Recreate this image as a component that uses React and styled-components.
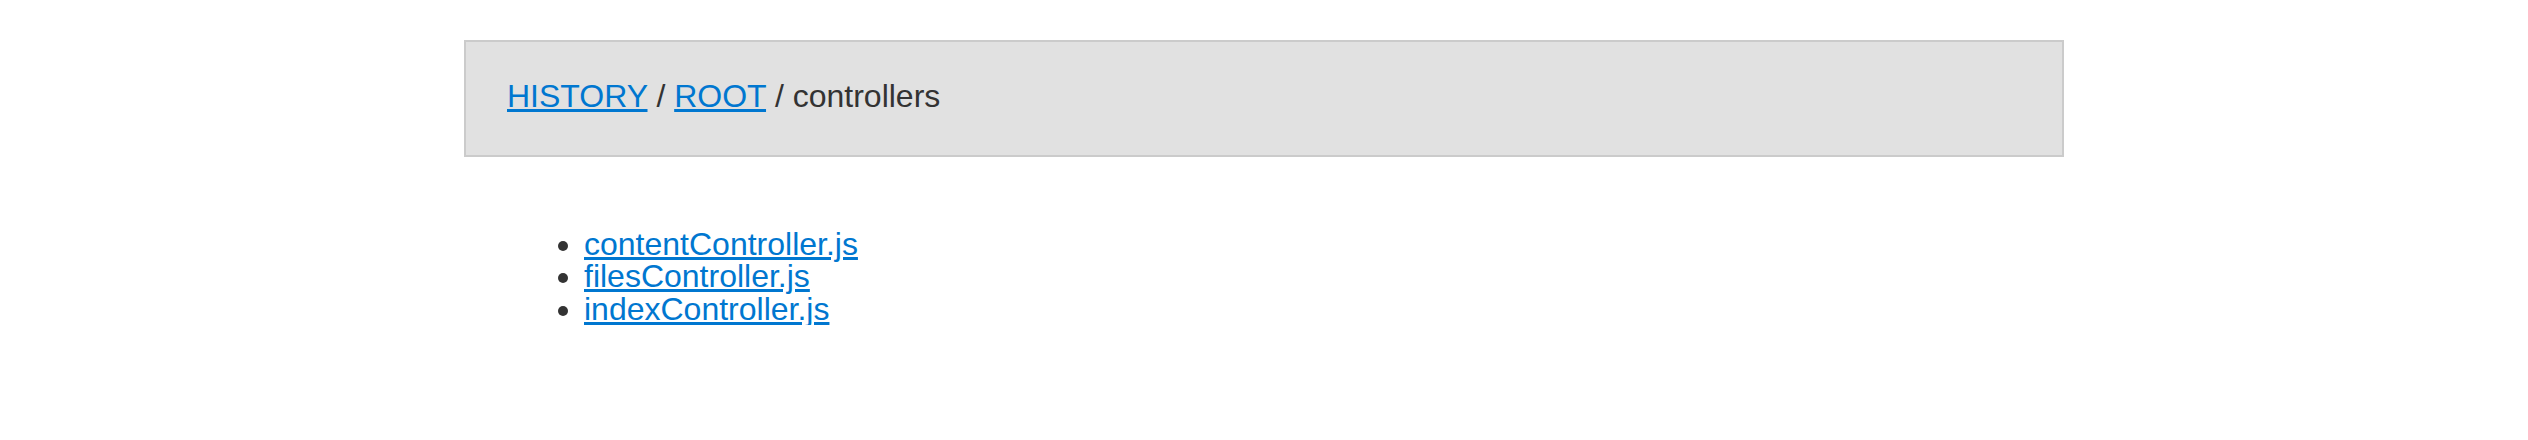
import React from "react";
import styled, { createGlobalStyle } from "styled-components";

const GlobalStyle = createGlobalStyle`
  body {
    margin: 0;
    background: #ffffff;
    font-family: "Liberation Sans", Arial, Helvetica, sans-serif;
    color: #333333;
  }
`;

const files = ["contentController.js", "filesController.js", "indexController.js"];

const Page = styled.div`
  width: 1600px;
  margin: 40px auto 0;
`;

const Breadcrumb = styled.div`
  box-sizing: border-box;
  background-color: #e1e1e1;
  border: 2px solid #cbcbcb;
  padding: 38px 40px 43px 41px;
  font-size: 32px;
  line-height: 32px;
`;

const Link = styled.a`
  color: #0077d0;
  text-decoration: underline;
  cursor: pointer;
`;

const FileList = styled.ul`
  margin: 71px 0 0;
  padding-left: 120px;
  font-size: 32px;
  line-height: 32.4px;
  color: #333333;
`;

const App = () => {
  return (
    <>
      <GlobalStyle />
      <Page>
        <Breadcrumb>
          <Link href="#">HISTORY</Link> / <Link href="#">ROOT</Link> / controllers
        </Breadcrumb>
        <FileList>
          {files.map((file) => (
            <li key={file}>
              <Link href="#">{file}</Link>
            </li>
          ))}
        </FileList>
      </Page>
    </>
  );
};

export default App;
